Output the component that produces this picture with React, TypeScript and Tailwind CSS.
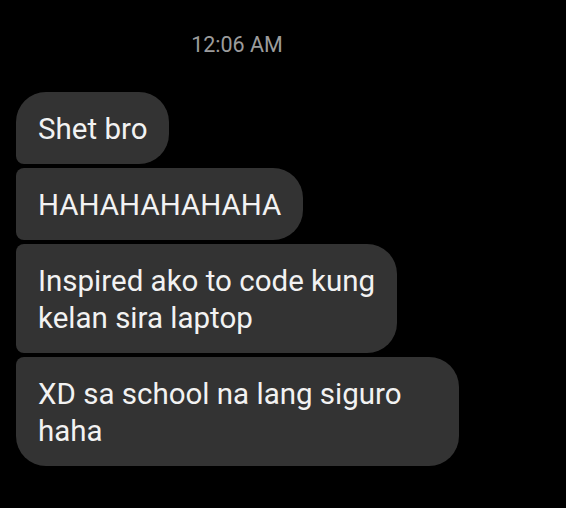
const messages = [
  { lines: ['Shet bro'], cls: 'w-fit rounded-tl-[30px] rounded-bl-[8px]' },
  { lines: ['HAHAHAHAHAHA'], cls: 'w-fit rounded-l-[8px]' },
  { lines: ['Inspired ako to code kung', 'kelan sira laptop'], cls: 'w-fit rounded-l-[8px]' },
  { lines: ['XD sa school na lang siguro', 'haha'], cls: 'w-[443px] rounded-tl-[8px] rounded-bl-[30px]' },
];

export default function App() {
  return (
    <div className="w-[566px] h-[508px] bg-black overflow-hidden" style={{ fontFamily: 'Roboto, "Liberation Sans", sans-serif' }}>
      <div className="w-[474px] pt-[31px] text-center text-[21.5px] leading-[28px] text-[#9c9c9c]">12:06 AM</div>
      <div className="mt-[33px] pl-[16px] flex flex-col gap-[4px]">
        {messages.map((m) => (
          <div
            key={m.lines[0]}
            className={`bg-[#333333] rounded-r-[30px] px-[22px] pt-[19px] pb-[16px] text-[29.5px] leading-[37px] text-[#f2f2f2] whitespace-nowrap ${m.cls}`}
          >
            {m.lines.map((l) => (
              <div key={l}>{l}</div>
            ))}
          </div>
        ))}
      </div>
    </div>
  );
}
